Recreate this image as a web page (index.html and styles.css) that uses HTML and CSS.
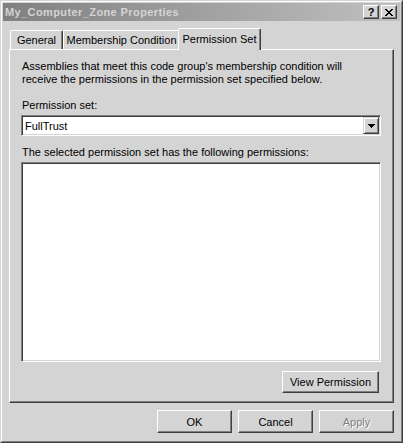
FILE: index.html
```html
<!DOCTYPE html>
<html>
<head>
<meta charset="utf-8">
<link rel="stylesheet" href="styles.css">
</head>
<body>
<div class="window">
  <div class="frame">
    <div class="titlebar">
      <span class="title">My_Computer_Zone Properties</span>
      <div class="caption-buttons">
        <div class="cap-btn help">?</div>
        <div class="cap-btn close">
          <svg width="8" height="7" viewBox="0 0 8 7" shape-rendering="crispEdges"><path d="M0 0h2v1h-2zM6 0h2v1h-2zM1 1h2v1h-2zM5 1h2v1h-2zM2 2h4v1h-4zM3 3h2v1h-2zM2 4h4v1h-4zM1 5h2v1h-2zM5 5h2v1h-2zM0 6h2v1h-2zM6 6h2v1h-2z" fill="#000"/></svg>
        </div>
      </div>
    </div>
    <div class="body">
      <div class="tabs">
        <div class="tab tab-general">General</div>
        <div class="tab tab-membership">Membership Condition</div>
        <div class="tab tab-active">Permission Set</div>
      </div>
      <div class="panel">
        <p class="intro">Assemblies that meet this code group's membership condition will<br>receive the permissions in the permission set specified below.</p>
        <div class="label label-set">Permission set:</div>
        <div class="combo">
          <span class="combo-text">FullTrust</span>
          <div class="combo-btn">
            <svg width="7" height="4" viewBox="0 0 7 4" shape-rendering="crispEdges"><path d="M0 0h7v1h-7zM1 1h5v1h-5zM2 2h3v1h-3zM3 3h1v1h-1z" fill="#000"/></svg>
          </div>
        </div>
        <div class="label label-list">The selected permission set has the following permissions:</div>
        <div class="listbox"></div>
        <div class="panel-actions">
          <div class="btn btn-view">View Permission</div>
        </div>
      </div>
      <div class="footer">
        <div class="btn btn-dlg">OK</div>
        <div class="btn btn-dlg">Cancel</div>
        <div class="btn btn-dlg disabled">Apply</div>
      </div>
    </div>
  </div>
</div>
</body>
</html>
```
FILE: styles.css
```css
html, body {
  margin: 0;
  padding: 0;
  background: #d4d4d4;
}
body {
  font-family: "Liberation Sans", Arial, sans-serif;
  font-size: 11px;
  color: #000;
}
.window {
  width: 403px;
  height: 443px;
  box-sizing: border-box;
  border: 1px solid;
  border-color: #d4d4d4 #404040 #404040 #d4d4d4;
  background: #d4d4d4;
}
.frame {
  height: 100%;
  box-sizing: border-box;
  border: 1px solid;
  border-color: #fff #808080 #808080 #fff;
  padding: 1px;
  display: flex;
  flex-direction: column;
}
.titlebar {
  height: 18px;
  flex: none;
  display: flex;
  align-items: center;
  padding: 0 3px 0 2px;
  background: linear-gradient(to right, #808080, #c0c0c0);
}
.title {
  font-weight: bold;
  color: #d4d4d4;
  font-size: 11px;
  letter-spacing: 0.4px;
}
.caption-buttons {
  margin-left: auto;
  display: flex;
  gap: 2px;
}
.cap-btn {
  width: 16px;
  height: 14px;
  box-sizing: border-box;
  border: 1px solid;
  border-color: #fff #404040 #404040 #fff;
  box-shadow: inset -1px -1px 0 #808080;
  background: #d4d4d4;
  display: flex;
  align-items: center;
  justify-content: center;
}
.help {
  font-weight: bold;
  font-size: 11px;
  line-height: 12px;
}
.close svg {
  display: block;
}
.body {
  flex: 1;
  display: flex;
  flex-direction: column;
  padding: 7px 6px 0 6px;
}
.tabs {
  height: 21px;
  display: flex;
  align-items: flex-end;
  padding-left: 1px;
}
.tab {
  box-sizing: border-box;
  height: 19px;
  border: 1px solid;
  border-bottom: none;
  border-color: #fff #404040 transparent #fff;
  border-radius: 2px 2px 0 0;
  box-shadow: inset -1px 0 0 #808080;
  text-align: center;
  line-height: 13px;
  padding-top: 3px;
  background: #d4d4d4;
  white-space: nowrap;
}
.tab-general {
  width: 53px;
}
.tab-membership {
  width: 117px;
}
.tab-active {
  width: 83px;
  height: 22px;
  margin-left: -2px;
  margin-bottom: -1px;
  padding-top: 4px;
  position: relative;
  z-index: 2;
}
.panel {
  height: 354px;
  box-sizing: border-box;
  border: 1px solid;
  border-color: #fff #404040 #404040 #fff;
  box-shadow: inset -1px -1px 0 #808080;
  padding: 10px 12px 0 11px;
  display: flex;
  flex-direction: column;
}
.intro {
  margin: 0;
  line-height: 13px;
  padding-left: 1px;
  white-space: nowrap;
}
.label {
  line-height: 13px;
  padding-left: 1px;
}
.label-set {
  margin-top: 13px;
}
.combo {
  margin-top: 3px;
  height: 21px;
  box-sizing: border-box;
  border: 1px solid;
  border-color: #808080 #fff #fff #808080;
  box-shadow: inset 1px 1px 0 #404040, inset -1px -1px 0 #d4d4d4;
  background: #fff;
  display: flex;
  align-items: center;
  padding: 1px;
}
.combo-text {
  padding-left: 2px;
}
.combo-btn {
  margin-left: auto;
  width: 16px;
  height: 17px;
  box-sizing: border-box;
  border: 1px solid;
  border-color: #d4d4d4 #404040 #404040 #d4d4d4;
  box-shadow: inset 1px 1px 0 #fff, inset -1px -1px 0 #808080;
  background: #d4d4d4;
  display: flex;
  align-items: center;
  justify-content: center;
}
.combo-btn svg {
  display: block;
}
.label-list {
  margin-top: 10px;
}
.listbox {
  margin-top: 3px;
  height: 200px;
  box-sizing: border-box;
  border: 1px solid;
  border-color: #808080 #fff #fff #808080;
  box-shadow: inset 1px 1px 0 #404040, inset -1px -1px 0 #d4d4d4;
  background: #fff;
}
.panel-actions {
  margin-top: 9px;
  display: flex;
  justify-content: flex-end;
  padding-right: 2px;
}
.btn {
  box-sizing: border-box;
  border: 1px solid;
  border-color: #fff #404040 #404040 #fff;
  box-shadow: inset -1px -1px 0 #808080;
  background: #d4d4d4;
  display: flex;
  align-items: center;
  justify-content: center;
  white-space: nowrap;
}
.btn-view {
  width: 97px;
  height: 22px;
}
.footer {
  padding-top: 7px;
  display: flex;
  justify-content: flex-end;
  gap: 6px;
}
.btn-dlg {
  width: 75px;
  height: 23px;
}
.disabled {
  color: #808080;
  text-shadow: 1px 1px 0 #fff;
}
```
